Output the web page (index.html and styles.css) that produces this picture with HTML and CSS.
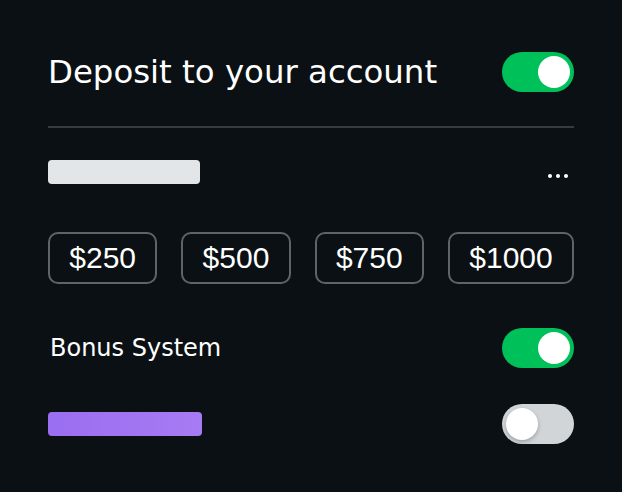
FILE: index.html
```html
<!DOCTYPE html>
<html>
<head>
    <title>Deposit</title>
    <meta name="viewport" content="width=device-width, initial-scale=1">
    <link rel="stylesheet" href="styles.css">
</head>
<body>
    <div class="panel">
        <div class="row header-row">
            <h1>Deposit to your account</h1>
            <div class="switch on"><span class="knob"></span></div>
        </div>
        <hr class="divider">
        <div class="row amount-row">
            <div class="placeholder light"></div>
            <div class="more"><span></span><span></span><span></span></div>
        </div>
        <div class="amounts">
            <button class="amount">$250</button>
            <button class="amount">$500</button>
            <button class="amount">$750</button>
            <button class="amount">$1000</button>
        </div>
        <div class="row bonus-row">
            <span class="label">Bonus System</span>
            <div class="switch on"><span class="knob"></span></div>
        </div>
        <div class="row extra-row">
            <div class="placeholder purple"></div>
            <div class="switch off"><span class="knob"></span></div>
        </div>
    </div>
</body>
</html>
```

FILE: styles.css
```css
body {
    margin: 0;
    background: #0a1013;
    font-family: "DejaVu Sans", Verdana, sans-serif;
    color: #ffffff;
}
.panel {
    padding: 52px 48px 0;
}
.row {
    display: flex;
    align-items: center;
    justify-content: space-between;
}
h1 {
    margin: 0;
    font-size: 32.4px;
    font-weight: normal;
    line-height: 40px;
}
.divider {
    margin: 34px 0 0;
    border: none;
    height: 2px;
    background: #363b3f;
}
.amount-row {
    margin-top: 32px;
    height: 24px;
}
.placeholder {
    height: 24px;
    border-radius: 4px;
}
.placeholder.light {
    width: 152px;
    background: #e3e6e9;
}
.placeholder.purple {
    width: 154px;
    background: linear-gradient(90deg, #9a6ef0, #a77bf3);
}
.more {
    display: flex;
    gap: 4px;
    margin-right: 6px;
    padding-top: 8px;
}
.more span {
    width: 4px;
    height: 4px;
    border-radius: 50%;
    background: #ffffff;
}
.amounts {
    display: flex;
    gap: 24px;
    margin-top: 48px;
}
.amount {
    flex: 1 1 auto;
    height: 52px;
    padding: 0 19px;
    background: transparent;
    border: 2px solid #5f6468;
    border-radius: 10px;
    color: #ffffff;
    font-family: "Liberation Sans", Arial, sans-serif;
    font-size: 30px;
    cursor: pointer;
}
.bonus-row {
    margin-top: 44px;
}
.label {
    font-size: 24px;
    padding-left: 2px;
}
.extra-row {
    margin-top: 36px;
}
.switch {
    box-sizing: border-box;
    width: 72px;
    height: 40px;
    padding: 4px;
    border-radius: 20px;
    display: flex;
}
.switch .knob {
    width: 32px;
    height: 32px;
    border-radius: 50%;
    background: #ffffff;
}
.switch.on {
    background: #00c05a;
    justify-content: flex-end;
}
.switch.off {
    background: #d2d5d8;
    justify-content: flex-start;
}
.switch.off .knob {
    box-shadow: 0 2px 4px rgba(0, 0, 0, 0.25);
}
```
